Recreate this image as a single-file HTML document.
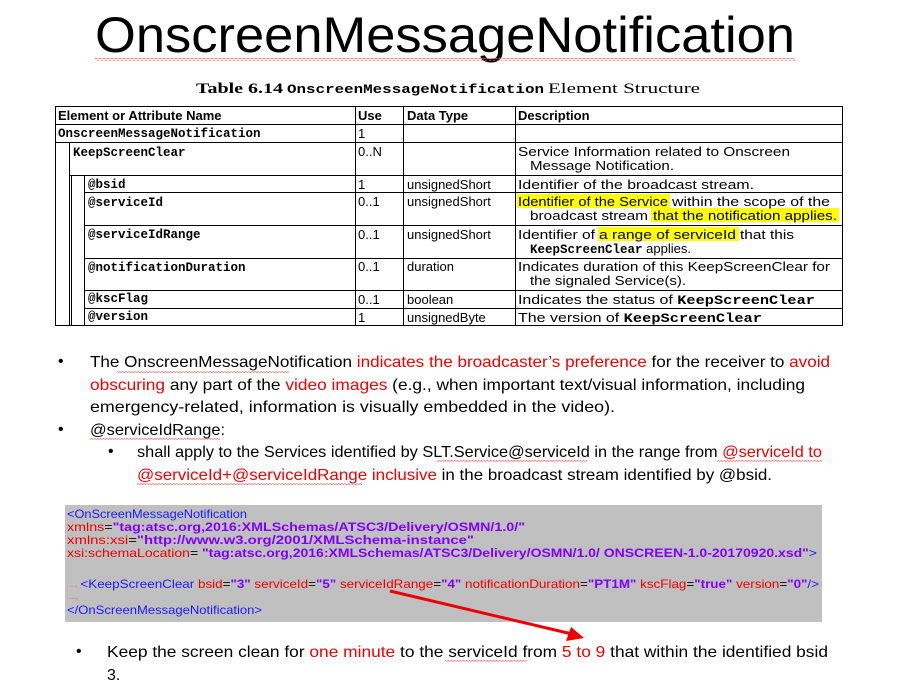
<!DOCTYPE html>
<html><head><meta charset="utf-8"><style>
html,body{margin:0;padding:0;background:#fff;width:922px;height:691px;overflow:hidden}
svg{display:block}
.c{font-family:"Liberation Sans",sans-serif}
.m{font-family:"Liberation Mono",monospace;font-weight:bold}
</style></head><body>
<svg width="922" height="691" viewBox="0 0 922 691" xmlns="http://www.w3.org/2000/svg">
<defs>
<pattern id="wv" width="4" height="3" patternUnits="userSpaceOnUse"><path d="M0 2 L2 0.5 L4 2" stroke="#e66" stroke-width="0.8" fill="none"/></pattern>
<pattern id="wv2" width="3" height="2" patternUnits="userSpaceOnUse"><path d="M0 1.5 L1.5 0.3 L3 1.5" stroke="#e55" stroke-width="0.6" fill="none"/></pattern>
</defs>
<text x="95" y="52" font-family="'Liberation Sans',sans-serif" font-size="50" textLength="700" lengthAdjust="spacingAndGlyphs" fill="#000">OnscreenMessageNotification</text>
<rect x="95" y="58" width="700" height="3" fill="url(#wv)"/>
<text x="196" y="93" font-family="Liberation Serif,serif" font-weight="bold" font-size="15" textLength="87" lengthAdjust="spacingAndGlyphs">Table 6.14</text>
<text x="287" y="93" class="m" font-size="12.5" textLength="257" lengthAdjust="spacingAndGlyphs">OnscreenMessageNotification</text>
<text x="548" y="93" font-family="Liberation Serif,serif" font-size="15" textLength="152" lengthAdjust="spacingAndGlyphs">Element Structure</text>

<rect x="517" y="194" width="153" height="14" fill="#ff0"/>
<rect x="651" y="208" width="188" height="14" fill="#ff0"/>
<rect x="598" y="227" width="141" height="14" fill="#ff0"/>
<g stroke="#000" stroke-width="1" fill="none">
<rect x="55.5" y="106.5" width="787" height="219"/>
<line x1="55" y1="124.5" x2="843" y2="124.5"/>
<line x1="55" y1="142.5" x2="843" y2="142.5"/>
<line x1="69" y1="175.5" x2="843" y2="175.5"/>
<line x1="84" y1="192.5" x2="843" y2="192.5"/>
<line x1="84" y1="225.5" x2="843" y2="225.5"/>
<line x1="84" y1="258.5" x2="843" y2="258.5"/>
<line x1="84" y1="290.5" x2="843" y2="290.5"/>
<line x1="84" y1="308.5" x2="843" y2="308.5"/>
<line x1="355.5" y1="106" x2="355.5" y2="326"/>
<line x1="403.5" y1="106" x2="403.5" y2="326"/>
<line x1="515.5" y1="106" x2="515.5" y2="326"/>
<line x1="69.5" y1="142" x2="69.5" y2="326"/>
<line x1="84.5" y1="175" x2="84.5" y2="326"/>
<line x1="71.5" y1="175" x2="71.5" y2="326"/>
</g>
<g class="c" font-size="13" fill="#000">
<text x="58" y="120" font-weight="bold">Element or Attribute Name</text>
<text x="358" y="120" font-weight="bold">Use</text>
<text x="407" y="120" font-weight="bold">Data Type</text>
<text x="518" y="120" font-weight="bold">Description</text>
<text x="358" y="138">1</text>
<text x="358" y="156">0..N</text>
<text x="518" y="156" textLength="272" lengthAdjust="spacingAndGlyphs">Service Information related to Onscreen</text>
<text x="530" y="170" textLength="144" lengthAdjust="spacingAndGlyphs">Message Notification.</text>
<text x="358" y="189">1</text><text x="407" y="189">unsignedShort</text><text x="518" y="189" textLength="236" lengthAdjust="spacingAndGlyphs">Identifier of the broadcast stream.</text>
<text x="358" y="206">0..1</text><text x="407" y="206">unsignedShort</text>
<text x="518" y="206" textLength="150" lengthAdjust="spacingAndGlyphs">Identifier of the Service</text>
<text x="672" y="206" textLength="158" lengthAdjust="spacingAndGlyphs">within the scope of the</text>
<text x="530" y="220" textLength="118" lengthAdjust="spacingAndGlyphs">broadcast stream</text>
<text x="653" y="220" textLength="184" lengthAdjust="spacingAndGlyphs">that the notification applies.</text>
<text x="358" y="239">0..1</text><text x="407" y="239">unsignedShort</text>
<text x="518" y="239" textLength="77" lengthAdjust="spacingAndGlyphs">Identifier of</text>
<text x="599" y="239" textLength="137" lengthAdjust="spacingAndGlyphs">a range of serviceId</text>
<text x="740" y="239" textLength="54" lengthAdjust="spacingAndGlyphs">that this</text>
<text x="530" y="253"><tspan class="m" font-size="12.5">KeepScreenClear</tspan> applies.</text>
<text x="358" y="271">0..1</text><text x="407" y="271">duration</text><text x="518" y="271" textLength="312" lengthAdjust="spacingAndGlyphs">Indicates duration of this KeepScreenClear for</text>
<text x="530" y="285" textLength="156" lengthAdjust="spacingAndGlyphs">the signaled Service(s).</text>
<text x="358" y="304">0..1</text><text x="407" y="304">boolean</text><text x="518" y="304" textLength="297" lengthAdjust="spacingAndGlyphs">Indicates the status of <tspan class="m" font-size="12.5">KeepScreenClear</tspan></text>
<text x="358" y="322">1</text><text x="407" y="322">unsignedByte</text><text x="518" y="322" textLength="244" lengthAdjust="spacingAndGlyphs">The version of <tspan class="m" font-size="12.5">KeepScreenClear</tspan></text>
</g>
<g class="m" font-size="12.5" fill="#000">
<text x="58" y="137">OnscreenMessageNotification</text>
<text x="73" y="156">KeepScreenClear</text>
<text x="88" y="188">@bsid</text>
<text x="88" y="206">@serviceId</text>
<text x="88" y="238">@serviceIdRange</text>
<text x="88" y="271">@notificationDuration</text>
<text x="88" y="302">@kscFlag</text>
<text x="88" y="320">@version</text>
</g>

<g class="c" font-size="16" fill="#000">
<text x="58" y="366">•</text>
<text x="90" y="367" textLength="740" lengthAdjust="spacingAndGlyphs">The OnscreenMessageNotification <tspan fill="#e00">indicates the broadcaster’s preference</tspan> for the receiver to <tspan fill="#e00">avoid</tspan></text>
<text x="90" y="390" textLength="715" lengthAdjust="spacingAndGlyphs"><tspan fill="#e00">obscuring</tspan> any part of the <tspan fill="#e00">video images</tspan> (e.g., when important text/visual information, including</text>
<text x="90" y="412" textLength="525" lengthAdjust="spacingAndGlyphs">emergency-related, information is visually embedded in the video).</text>
<text x="58" y="434">•</text>
<text x="90" y="435" textLength="135" lengthAdjust="spacingAndGlyphs">@serviceIdRange:</text>
<text x="108" y="456">•</text>
<text x="137" y="457" textLength="685" lengthAdjust="spacingAndGlyphs">shall apply to the Services identified by SLT.Service@serviceId  in the range from <tspan fill="#e00">@serviceId to</tspan></text>
<text x="137" y="480" textLength="635" lengthAdjust="spacingAndGlyphs"><tspan fill="#e00">@serviceId+@serviceIdRange inclusive</tspan> in the broadcast stream identified by @bsid.</text>
<text x="76" y="656">•</text>
<text x="107" y="657" textLength="721" lengthAdjust="spacingAndGlyphs">Keep the screen clean for <tspan fill="#e00">one minute</tspan> to the serviceId  from <tspan fill="#e00">5 to 9</tspan> that within the identified bsid</text>
<text x="107" y="680">3.</text>
</g>
<rect x="117" y="371" width="172" height="2" fill="url(#wv2)"/>
<rect x="90" y="438" width="130" height="2" fill="url(#wv2)"/>
<rect x="445" y="660" width="82" height="2" fill="url(#wv2)"/>
<rect x="437" y="460" width="150" height="2" fill="url(#wv2)"/>
<rect x="717" y="460" width="105" height="2" fill="url(#wv2)"/>
<rect x="137" y="483" width="225" height="2" fill="url(#wv2)"/>

<rect x="65" y="505" width="757" height="117" fill="#c0c0c0"/>
<g class="c" font-size="12">
<text x="67" y="518" fill="#1a1aff" textLength="180" lengthAdjust="spacingAndGlyphs">&lt;OnScreenMessageNotification</text>
<text x="67" y="531" textLength="458" lengthAdjust="spacingAndGlyphs"><tspan fill="#e00">xmlns</tspan><tspan fill="#000">=</tspan><tspan fill="#8000ff" font-weight="bold">"tag:atsc.org,2016:XMLSchemas/ATSC3/Delivery/OSMN/1.0/"</tspan></text>
<text x="67" y="544" textLength="407" lengthAdjust="spacingAndGlyphs"><tspan fill="#e00">xmlns:xsi</tspan><tspan fill="#000">=</tspan><tspan fill="#8000ff" font-weight="bold">"http://www.w3.org/2001/XMLSchema-instance"</tspan></text>
<text x="67" y="557" textLength="750" lengthAdjust="spacingAndGlyphs"><tspan fill="#e00">xsi:schemaLocation</tspan><tspan fill="#000">= </tspan><tspan fill="#8000ff" font-weight="bold">"tag:atsc.org,2016:XMLSchemas/ATSC3/Delivery/OSMN/1.0/ ONSCREEN-1.0-20170920.xsd"</tspan><tspan fill="#1a1aff">&gt;</tspan></text>
<text x="67" y="588" textLength="752" lengthAdjust="spacingAndGlyphs"><tspan fill="#e88">→</tspan><tspan fill="#1a1aff">&lt;KeepScreenClear </tspan><tspan fill="#e00">bsid</tspan>=<tspan fill="#8000ff" font-weight="bold">"3"</tspan> <tspan fill="#e00">serviceId</tspan>=<tspan fill="#8000ff" font-weight="bold">"5"</tspan> <tspan fill="#e00">serviceIdRange</tspan>=<tspan fill="#8000ff" font-weight="bold">"4"</tspan> <tspan fill="#e00">notificationDuration</tspan>=<tspan fill="#8000ff" font-weight="bold">"PT1M"</tspan> <tspan fill="#e00">kscFlag</tspan>=<tspan fill="#8000ff" font-weight="bold">"true"</tspan> <tspan fill="#e00">version</tspan>=<tspan fill="#8000ff" font-weight="bold">"0"</tspan><tspan fill="#1a1aff">/&gt;</tspan></text>
<text x="67" y="601" fill="#e88" font-size="14">→</text>
<text x="67" y="614" fill="#1a1aff" textLength="195" lengthAdjust="spacingAndGlyphs">&lt;/OnScreenMessageNotification&gt;</text>
</g>
<line x1="390" y1="591" x2="572" y2="634" stroke="#e00" stroke-width="3"/>
<polygon points="584,638 566,641 571,627" fill="#e00"/>
</svg>
</body></html>
